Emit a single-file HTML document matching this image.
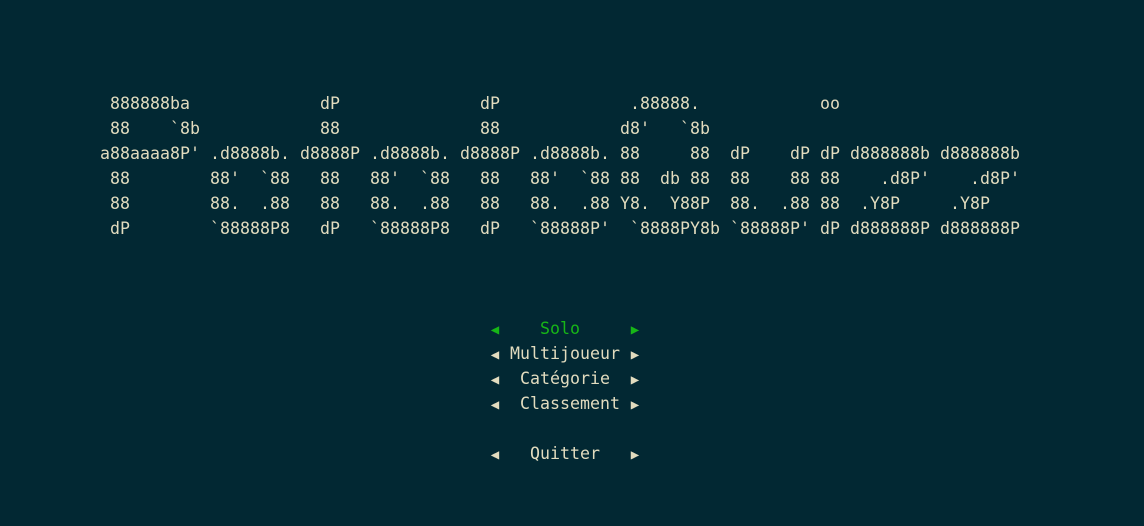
<!DOCTYPE html>
<html><head><meta charset="utf-8"><style>
html,body{margin:0;padding:0;background:#022833;width:1144px;height:526px;overflow:hidden}
pre{position:absolute;left:100px;top:91px;margin:0;font-family:"DejaVu Sans Mono","Liberation Mono",monospace;font-size:16.61px;line-height:25px;color:#e2dcbf;white-space:pre}
.g{color:#17b617}
.t{display:inline-block;width:9.99px;text-align:center;font-size:14px;line-height:0;vertical-align:0}
</style></head><body>
<pre> 888888ba             dP              dP             .88888.            oo
 88    `8b            88              88            d8'   `8b
a88aaaa8P' .d8888b. d8888P .d8888b. d8888P .d8888b. 88     88  dP    dP dP d888888b d888888b
 88        88'  `88   88   88'  `88   88   88'  `88 88  db 88  88    88 88    .d8P'    .d8P'
 88        88.  .88   88   88.  .88   88   88.  .88 Y8.  Y88P  88.  .88 88  .Y8P     .Y8P
 dP        `88888P8   dP   `88888P8   dP   `88888P'  `8888PY8b `88888P' dP d888888P d888888P



                                       <span class="g"><span class="t">◀</span>    Solo     <span class="t">▶</span></span>
                                       <span class="t">◀</span> Multijoueur <span class="t">▶</span>
                                       <span class="t">◀</span>  Catégorie  <span class="t">▶</span>
                                       <span class="t">◀</span>  Classement <span class="t">▶</span>

                                       <span class="t">◀</span>   Quitter   <span class="t">▶</span></pre>
</body></html>
